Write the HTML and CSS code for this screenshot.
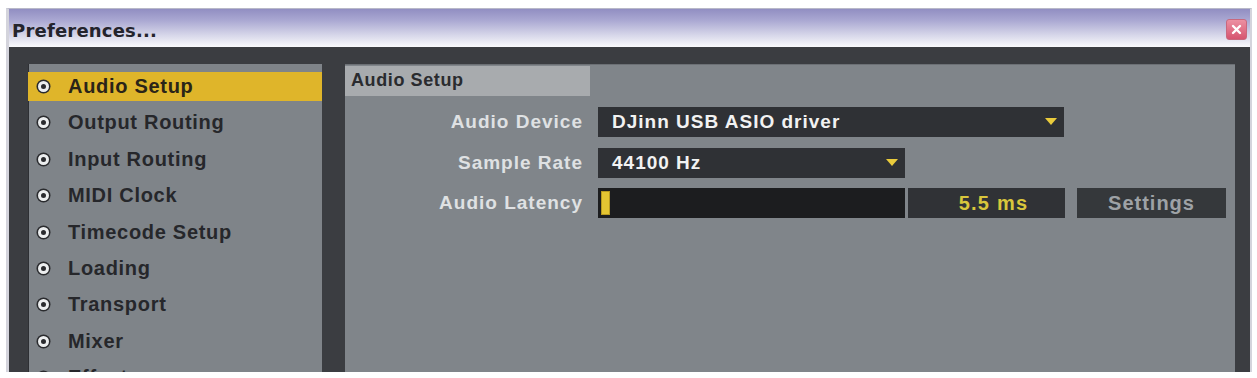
FILE: index.html
```html
<!DOCTYPE html>
<html>
<head>
    <title>Preferences</title>
    <link rel="stylesheet" href="styles.css">
</head>
<body>
    <div class="window">
        <div class="titlebar">
            <span class="title">Preferences...</span>
            <button class="close" aria-label="Close">
                <svg width="11" height="11" viewBox="0 0 11 11">
                    <path d="M2 2 L9 9 M9 2 L2 9" stroke="#fff" stroke-width="2.4" stroke-linecap="round"/>
                </svg>
            </button>
        </div>

        <div class="frame">
            <ul class="nav">
                <li class="nav-item active"><span class="radio"></span>Audio Setup</li>
                <li class="nav-item"><span class="radio"></span>Output Routing</li>
                <li class="nav-item"><span class="radio"></span>Input Routing</li>
                <li class="nav-item"><span class="radio"></span>MIDI Clock</li>
                <li class="nav-item"><span class="radio"></span>Timecode Setup</li>
                <li class="nav-item"><span class="radio"></span>Loading</li>
                <li class="nav-item"><span class="radio"></span>Transport</li>
                <li class="nav-item"><span class="radio"></span>Mixer</li>
                <li class="nav-item"><span class="radio"></span>Effects</li>
            </ul>

            <div class="page">
                <div class="page-tab">Audio Setup</div>
                <div class="form">
                    <label class="field-label">Audio Device</label>
                    <div class="select wide">DJinn USB ASIO driver<span class="arrow"></span></div>

                    <label class="field-label">Sample Rate</label>
                    <div class="select narrow">44100 Hz<span class="arrow"></span></div>

                    <label class="field-label">Audio Latency</label>
                    <div class="latency">
                        <div class="latency-bar"><span class="latency-fill"></span></div>
                        <div class="latency-value">5.5 ms</div>
                        <button class="settings">Settings</button>
                    </div>
                </div>
            </div>
        </div>
    </div>
</body>
</html>
```

FILE: styles.css
```css
body {
    margin: 0;
    background: #ffffff;
    font-family: 'Liberation Sans', Arial, sans-serif;
}

.window {
    margin: 8px 0 0 6px;
    width: 1246px;
    height: 364px;
    box-sizing: border-box;
    border-left: 3px solid #d4d4dc;
    border-right: 2px solid #d4d4dc;
    border-top: 1px solid #b8b8c8;
    display: flex;
    flex-direction: column;
    overflow: hidden;
}

.titlebar {
    height: 38px;
    flex-shrink: 0;
    display: flex;
    align-items: center;
    justify-content: space-between;
    padding: 5px 3px 0 3px;
    box-sizing: border-box;
    background: linear-gradient(to bottom, #918ec2 0%, #aaa8d2 30%, #d8d8ea 70%, #fafafc 100%);
}

.title {
    font-family: 'DejaVu Sans', Verdana, sans-serif;
    font-weight: bold;
    font-size: 18px;
    letter-spacing: 0.2px;
    color: #24242c;
}

.close {
    width: 21px;
    height: 21px;
    padding: 0;
    border: 1px solid #c8687e;
    border-radius: 3px;
    background: linear-gradient(to bottom, #ec90a2, #d65570);
    display: flex;
    align-items: center;
    justify-content: center;
    margin-top: -2px;
}

.frame {
    flex: 1;
    display: flex;
    gap: 23px;
    padding: 17px 15px 0 19px;
    background: #3b3d41;
    min-height: 0;
}

.nav {
    list-style: none;
    margin: 0;
    padding: 8px 0 0;
    width: 294px;
    flex-shrink: 0;
    background: #7f8489;
    box-shadow: inset 1px 0 0 #2e3034;
    display: flex;
    flex-direction: column;
    gap: 7.4px;
}

.nav-item {
    height: 29px;
    flex-shrink: 0;
    display: flex;
    align-items: center;
    padding-left: 9px;
    font-weight: bold;
    font-size: 20px;
    letter-spacing: 0.7px;
    color: #26272b;
}

.nav-item.active {
    background: #dfb52a;
    color: #2a2418;
}

.radio {
    width: 5px;
    height: 5px;
    border-radius: 50%;
    background: #2a2b2e;
    border: 3px solid #eceeef;
    box-shadow: 0 0 0 1.5px #2a2b2e;
    margin: 0 19px 0 1px;
    flex-shrink: 0;
    box-sizing: content-box;
}

.page {
    flex: 1;
    background: #80858a;
    box-shadow: inset 0 1px 0 #6c7075;
    padding-top: 2px;
}

.page-tab {
    width: 245px;
    height: 30px;
    box-sizing: border-box;
    padding: 4px 0 0 6px;
    background: #a8abae;
    font-weight: bold;
    font-size: 18px;
    letter-spacing: 0.6px;
    color: #2a2b2f;
}

.form {
    display: grid;
    grid-template-columns: 238px auto;
    column-gap: 15px;
    row-gap: 10.5px;
    margin-top: 11px;
    align-items: center;
}

.field-label {
    text-align: right;
    font-weight: bold;
    font-size: 19px;
    letter-spacing: 1px;
    color: #dfe1e3;
}

.select {
    position: relative;
    height: 30px;
    box-sizing: border-box;
    display: flex;
    align-items: center;
    padding-left: 14px;
    background: #2f3135;
    color: #f2f2f2;
    font-weight: bold;
    font-size: 19px;
    letter-spacing: 1px;
}

.select.wide {
    width: 466px;
}

.select.narrow {
    width: 307px;
}

.arrow {
    position: absolute;
    right: 7px;
    top: 11px;
    width: 0;
    height: 0;
    border-left: 6.5px solid transparent;
    border-right: 6.5px solid transparent;
    border-top: 7px solid #e9cb3c;
}

.latency {
    display: flex;
    height: 30px;
}

.latency-bar {
    width: 307px;
    background: #1c1d1f;
    padding: 3px;
    box-sizing: border-box;
    display: flex;
}

.latency-fill {
    width: 9px;
    background: #e4c532;
    box-shadow: inset 0 0 0 1px #b89a20;
}

.latency-value {
    width: 157px;
    margin-left: 3px;
    background: #303236;
    color: #d9c63c;
    font-weight: bold;
    font-size: 20px;
    letter-spacing: 1.2px;
    display: flex;
    align-items: center;
    justify-content: center;
    padding-left: 14px;
    box-sizing: border-box;
}

.settings {
    width: 149px;
    margin-left: 12px;
    border: none;
    padding: 0;
    background: #35383b;
    color: #9ea2a6;
    font-family: 'Liberation Sans', Arial, sans-serif;
    font-weight: bold;
    font-size: 20px;
    letter-spacing: 1px;
}
```
